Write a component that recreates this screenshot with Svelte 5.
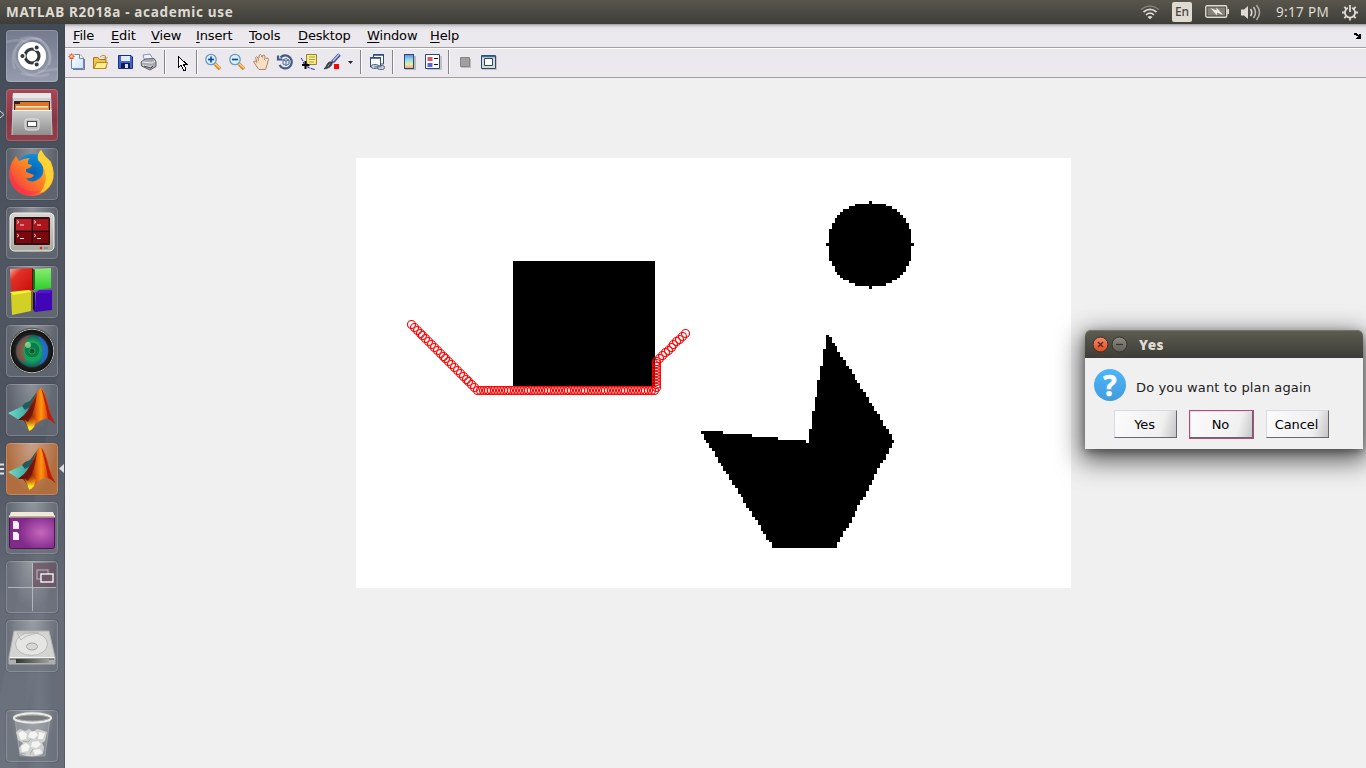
<script>
  const CELL_X = 715 / 251;
  const CELL_Y = 430 / 151;
  const px = (c) => Math.round(c * CELL_X);
  const py = (r) => Math.round(r * CELL_Y);
  const block = (c0, r0, c1, r1) =>
    `M${px(c0)} ${py(r0)}H${px(c1)}V${py(r1)}H${px(c0)}Z`;

  // Occupancy grid: square, disc and concave polygon
  let obstacles = block(55, 36, 105, 80);
  for (let dy = -15; dy <= 15; dy++) {
    const w = Math.floor(Math.sqrt(225 - dy * dy));
    obstacles += block(180 - w, 30 + dy, 181 + w, 31 + dy);
  }
  const spike = [95, 89, 84, 78, 73, 67];
  for (let c = 121; c <= 188; c++) {
    let top;
    if (c < 129) top = 96;
    else if (c < 139) top = 97;
    else if (c < 148) top = 98;
    else if (c < 158) top = 99;
    else if (c === 158) top = 100;
    else if (c < 165) top = spike[c - 159];
    else top = Math.floor(62 + ((c - 165) * 37) / 23);
    let bottom = 137;
    if (c < 146) bottom = Math.round(97 + (c - 121) * 1.6);
    else if (c > 168) bottom = Math.round(100 + (188 - c) * 1.85);
    obstacles += block(c, top, c + 1, bottom);
  }

  // Planned path, one marker per step
  const corners = [[55.5, 166.5], [121.5, 232.5], [298.5, 232.5], [300.5, 229.5], [300.5, 203], [329.5, 175.5]];
  const steps = [23, 62, 1, 9, 10];
  const trail = [];
  corners.slice(0, -1).forEach(([x, y], i) => {
    const [nx, ny] = corners[i + 1];
    for (let k = 0; k < steps[i]; k++) {
      const t = k / steps[i];
      trail.push([Math.floor(x + (nx - x) * t) + 0.5, Math.floor(y + (ny - y) * t) + 0.5]);
    }
  });
  trail.push([329.5, 175.5]);

  const menus = [
    ['File', 38], ['Edit', 40], ['View', 45], ['Insert', 53],
    ['Tools', 49], ['Desktop', 69], ['Window', 63], ['Help', 40]
  ];
  const tools = ['new', 'open', 'save', 'print', '|', 'gap', 'arrow', '|', 'zin', 'zout', 'hand', 'rot',
    'data', 'brush', 'caret', '|', 'link', '|', 'cbar', 'legend', '|', 'hide', 'dock'];
  const tiles = ['dash', 'files', 'firefox', 'terminator', 'blocks', 'camera', 'matlab', 'matlab2', 'window', 'workspace', 'disk', 'trash'];
</script>

<div class="screen">
  <header class="panel">
    <span class="title">MATLAB R2018a - academic use</span>
    <div class="tray">
      <svg class="wifi" width="20" height="16" viewBox="0 0 20 16" fill="none" stroke="#dfdbd2">
        <path d="M1 5.5Q10-1.5 19 5.5" stroke="#85827a" stroke-width="1.5" />
        <path d="M3.5 8Q10 2.8 16.500 8M6 10.800Q10 7.400 14 10.800" stroke-width="1.700" />
        <path d="M7.500 13Q10 11 12.500 13L10 15.200Z" fill="#dfdbd2" stroke="none" />
      </svg>
      <span class="lang">En</span>
      <svg class="battery" width="24" height="14" viewBox="0 0 24 14">
        <rect x=".75" y=".75" width="21" height="11.500" rx="1.500" fill="none" stroke="#dfdbd2" stroke-width="1.400" />
        <path d="M22.200 4H24V9H22.200z" fill="#dfdbd2" /><rect x="2.500" y="2.500" width="17.500" height="8" fill="#85827a" />
        <path d="M5.500 3L11.500 5.500V2.500L18 10L12 7.500V10.500Z" fill="#f0ede4" />
      </svg>
      <svg class="volume" width="20" height="17" viewBox="0 0 20 17" fill="none" stroke="#dfdbd2" stroke-width="1.600">
        <path d="M0 5.500H3L7 2V15L3 11.500H0Z" fill="#dfdbd2" stroke="none" />
        <path d="M9.500 5Q12 8.500 9.500 12" /><path d="M12.500 3Q16.500 8.500 12.500 14" stroke="#c3bfb7" />
        <path d="M15.500 1Q21.500 8.500 15.500 16" stroke="#aba79f" />
      </svg>
      <time>9:17 PM</time>
      <svg class="gear" width="16" height="17" viewBox="0 0 16 17" fill="none" stroke="#dfdbd2">
        <path d="M5.800 3.900A5.100 5.100 0 1 0 10.200 3.900" stroke-width="1.800" /><path d="M8 1V8" stroke-width="1.800" />
        <path d="M8 13.500V16.500M0 8.500H3M13 8.500H16M2.300 14.200L4.300 12.200M13.700 14.200L11.700 12.200M2.300 2.800L4.300 4.800M13.700 2.800L11.700 4.800" stroke-width="1.800" />
      </svg>
    </div>
  </header>

  <div class="body">
    <nav class="launcher">
      {#each tiles as t}
        <div class="tile {t}">
          <svg width="52" height="52" viewBox="0 0 52 52">
            {#if t === 'dash'}
              <g fill="none" stroke="#d9dbe5" stroke-opacity=".22" stroke-width="2.500">
                <path d="M9 39C1 18 18 5 31 9S46 28 43 35" /><path d="M14 9C35 2 47 19 43 32S22 47 15 43" /><path d="M43 44C22 52 5 34 9 22S26 7 36 10" />
                <path d="M1 12Q13 8 24 13M51 39Q43 40 32 42" />
              </g>
              <circle cx="26" cy="26" r="14" fill="#fff" />
              <circle cx="26" cy="26" r="7" fill="none" stroke="#33373d" stroke-width="3.200" />
              <g fill="#33373d" stroke="#fff" stroke-width="1.300"><circle cx="16.500" cy="26" r="2.700" /><circle cx="30.700" cy="17.500" r="2.700" /><circle cx="30.700" cy="34.500" r="2.700" /></g>
            {:else if t === 'files'}
              <path d="M7 4H45L46.500 46H5.500Z" fill="#cfcfcf" /><path d="M7 4H45V9H6.500Z" fill="#e8e8e8" />
              <path d="M8 12H44V22H8Z" fill="#33221d" /><path d="M9 15H14V13H43V22H9Z" fill="#dc7327" /><path d="M10 17H42V22H10Z" fill="#ffe6c4" /><path d="M9 18.500H43V22H9Z" fill="#ed9148" />
              <path d="M6.500 21H45.500V46H6.500Z" fill="url(#metal)" /><path d="M6.500 21.500H45.500" stroke="#f6f6f6" />
              <rect x="19" y="30" width="14" height="11" rx="2.500" fill="#bcbcbc" stroke="#e4e4e4" /><rect x="21.500" y="32.500" width="9" height="5" fill="#fff" stroke="#4c4c4c" />
            {:else if t === 'firefox'}
              <circle cx="26.500" cy="25" r="19" fill="url(#ffblue)" />
              <path d="M6 14L10 8L13 13Q18 10 24 10Q21 13 22 16L26 17Q25 20 20 21L20 24L28 27Q26 31 20 30Q24 36 31 32Q39 28 37 19Q36 15 32 12Q31 6 35 2Q38 9 43 12L45 14Q50 26 46 35Q40 47 27 48Q11 48 5 35Q1 24 6 14Z" fill="url(#fox)" />
              <path d="M35 2Q39 9 44 13Q50 27 45 36Q41 43 34 45Q42 34 39 24Q37 16 32 12Q31 6 35 2Z" fill="#ffd632" fill-opacity=".9" />
              <path d="M5 15Q4 30 13 38Q21 45 34 43Q22 51 11 42Q2 34 5 15Z" fill="#ff2854" fill-opacity=".5" />
            {:else if t === 'terminator'}
              <rect x="4" y="6" width="44" height="38" rx="4.500" fill="url(#monitor)" stroke="#f2f2ec" /><rect x="8" y="10" width="36" height="28" rx="1.500" fill="#301012" />
              <rect x="10" y="12" width="15.500" height="11.500" fill="#bd2028" /><rect x="27" y="12" width="15.500" height="11.500" fill="#a9151c" /><path d="M10 25H25.500V36H10ZM27 25H42.500V36H27Z" fill="#7b080d" />
              <g fill="none" stroke="#ffd5d5"><path d="M11 13.500L13 15L11 16.500M14 18H18M28 13.500L30 15L28 16.500M31 18H35M11 27L13 28.500L11 30M14 31.500H18M28 27L30 28.500L28 30M31 31.500H35" /></g>
              <circle cx="35" cy="41" r="1.300" fill="#f31818" /><path d="M38 40H42V42H38Z" fill="#91928a" />
            {:else if t === 'blocks'}
              <path d="M4 3L26 2V24L5 25Z" fill="url(#redb)" /><path d="M26 2L28 4V24H26Z" fill="#680b05" />
              <path d="M29 3L45 2V22L28 24Z" fill="url(#greenb)" /><path d="M27 5L29 4V23H27Z" fill="#087818" />
              <path d="M5 28L25 26V45L6 49Z" fill="#d2cf27" /><path d="M4 26L23 24L26 26L7 29Z" fill="#f5f12a" /><path d="M25 26L27 24V43L25 45Z" fill="#77770d" />
              <path d="M30 27L46 24V44L29 46Z" fill="#3f05b7" /><path d="M29 27L33 24L46 24L44 27Z" fill="#5314d6" /><path d="M29 27V46L27 43V26Z" fill="#21036b" />
            {:else if t === 'camera'}
              <circle cx="26" cy="26" r="23" fill="#101211" stroke="#686868" /><circle cx="26" cy="26" r="21.800" fill="none" stroke="#bfc0bd" stroke-width="1" />
              <circle cx="26" cy="26" r="20" fill="#1b1b1b" /><circle cx="26" cy="26" r="17" fill="#2c2c2b" /><circle cx="26" cy="26" r="16" fill="url(#lens)" />
              <path d="M11 31C8 20 16 11 25 10C17 17 17 29 20 38Q13 36 11 31Z" fill="#c63433" fill-opacity=".55" /><path d="M32 11C46 16 45 36 33 40C38 31 37 21 32 11Z" fill="#2869e2" fill-opacity=".75" />
              <circle cx="26" cy="25" r="8" fill="#087045" fill-opacity=".7" stroke="#36c776" stroke-opacity=".5" /><circle cx="26" cy="26" r="3" fill="#0e5932" stroke="#45d372" stroke-opacity=".5" />
              <circle cx="22" cy="20" r="3" fill="#d6ffb8" fill-opacity=".55" />
            {:else if t === 'matlab' || t === 'matlab2'}
              <path d="M2 29L15 23L19 20Q23 20 27 13Q32 5 35 4L30 16L22 31L13 36Z" fill="url(#teal)" />
              <path d="M16 22L19 19L24 17Q29 10 34 5L26 22L19 26Z" fill="#215b5d" />
              <path d="M12 36L18 31Q23 26 29 12Q32 5 35 4Q39 6 43 24Q45 33 49.500 40Q43 34 38 35Q32 37 28 43Q26 46 23 47Q21 40 17 36Z" fill="url(#mat)" />
              <path d="M18 35Q22 37 25 31L30 37L28 43Q26 46 23 47Q21 40 18 35Z" fill="url(#tip)" />
              <path d="M35 4Q39 9 42 23Q44 33 49.500 40Q45 36 42 35Q40 21 35 4Z" fill="#b91c0b" />
              <path d="M12 36L19 31Q26 22 31 9Q29 28 22 38Q18 34 12 36Z" fill="#68110e" fill-opacity=".8" />
            {:else if t === 'window'}
              <rect x="3.500" y="11" width="45" height="35.500" rx="2" fill="url(#purple)" stroke="#4d174e" /><path d="M5 10H47L49 14V15.500H3V14Z" fill="#f0ead9" />
              <path d="M4 15H48" stroke="#857a5d" /><path d="M7 19H11L13 21V27H7ZM7 30H11L13 32V38H7Z" fill="#f7eef7" />
            {:else if t === 'workspace'}
              <path d="M27 2H50V26H27Z" fill="#674a59" fill-opacity=".65" /><path d="M26.500 2V50M2 26.500H50" stroke="#c4c8d0" stroke-opacity=".75" />
              <rect x="31" y="9" width="11" height="9" fill="none" stroke="#b6a9b2" stroke-width="1.200" /><rect x="35" y="13" width="12" height="8" fill="#6c5764" stroke="#fff" stroke-width="1.300" />
            {:else if t === 'disk'}
              <path d="M8 11H43L49 37V44H3V37Z" fill="#d4d5d2" stroke="#aeb0ad" /><ellipse cx="25.500" cy="24" rx="16" ry="11.500" fill="#e5e6e4" stroke="#b7b9b7" />
              <path d="M11 13H33Q19 15 15 20Z" fill="none" stroke="#b7b9b7" /><ellipse cx="26" cy="26.500" rx="5.500" ry="3.500" fill="#d7d8d5" stroke="#a0a29f" />
              <path d="M3 37H49V44H3Z" fill="#aeb0ac" /><path d="M4 38.500H48V40H4Z" fill="#777b77" /><path d="M10 39H43V43H10Z" fill="url(#slot)" /><path d="M3.500 37.500H48.500" stroke="#f4f4f2" />
            {:else}
              <path d="M9 8L14 46H39L44 8Z" fill="#d8dbd8" fill-opacity=".22" stroke="#d8dad8" stroke-opacity=".35" />
              <path d="M10 22L14 19L19 21L23 19L27 22L31 19L35 20L41 22L39 31L36 33L38 37L37 44Q26 49 14 44L13 38L17 33L12 30Z" fill="#cfd1ce" />
              <path d="M12 23L17 21L21 24L20 29L15 30ZM24 22L29 21L32 25L28 29L22 27ZM33 22L39 23L37 29L32 29ZM15 36L20 33L24 36L22 41L16 42ZM26 32L32 31L35 34L31 38L25 37ZM27 40L34 39L36 43L29 45Z" fill="#f4f5f3" />
              <path d="M17 31L22 32L25 29M24 44L27 39M14 43L20 44" fill="none" stroke="#a9aca9" />
              <ellipse cx="26.500" cy="8" rx="18.500" ry="4.500" fill="#77797b" stroke="#e8ebe7" stroke-width="2.300" /><ellipse cx="26.500" cy="8" rx="16" ry="3" fill="none" stroke="#a9aca9" />
            {/if}
          </svg>
          {#if t === 'files'}<svg class="run" width="5" height="9" viewBox="0 0 5 9"><path d="M0 1L4 4.500L0 8" fill="none" stroke="#dcdcdc" /></svg>{/if}
          {#if t === 'matlab2'}
            <svg class="run" width="5" height="12" viewBox="0 0 5 12"><path d="M0 1.500H4M0 6H4M0 10.500H4" stroke="#e2e2e2" stroke-width="2" /></svg>
            <svg class="focus" width="5" height="9" viewBox="0 0 5 9"><path d="M5 0V9L0 4.500Z" fill="#dedede" /></svg>
          {/if}
        </div>
      {/each}
    </nav>

    <main>
      <div class="menubar">
        {#each menus as [name, w]}<span style="width:{w}px"><u>{name[0]}</u>{name.slice(1)}</span>{/each}
        <svg width="8" height="7" viewBox="0 0 8 7"><path d="M0 0H3V1H4V2H5V1H7V6H2V5H3V4H4V3H2V2H0Z" fill="#000" shape-rendering="crispEdges" /></svg>
      </div>
      <div class="toolbar">
        {#each tools as t}
          {#if t === '|'}<i class="sep"></i>
          {:else if t === 'gap'}<i class="gap"></i>
          {:else}
            <svg width={t === 'caret' ? 12 : t === 'arrow' ? 23 : 24} height="24" viewBox="0 0 {t === 'caret' ? 12 : t === 'arrow' ? 23 : 24} 24">
              {#if t === 'new'}
                <path d="M6.500 4.500H15L18.500 8V18.500H6.500Z" fill="url(#page)" stroke="#6b89ae" /><path d="M14.500 4.500V8.500H18.500" fill="#fff" stroke="#6b89ae" /><path d="M8 19.500H19.500V9" fill="none" stroke="#35527b" stroke-opacity=".7" />
                <circle cx="6.500" cy="6.500" r="3.500" fill="#ebe9ee" /><path d="M6.500 3.500V9.500M3.500 6.500H9.500M4.500 4.500L8.500 8.500M8.500 4.500L4.500 8.500" stroke="#e5552f" stroke-width="1.200" /><circle cx="6.500" cy="6.500" r="1.300" fill="#ffe28c" />
              {:else if t === 'open'}
                <path d="M4.500 18.500V7.500H9L10.500 9.500H17V18.500Z" fill="#f0c34c" stroke="#a87817" /><path d="M5 18.500L7.500 12.500H18.500L16.500 18.500Z" fill="#ffef91" stroke="#b88622" /><path d="M11 7Q14 4 16.500 6V8M14.500 7L16.500 9L18.500 7" fill="none" stroke="#b98c31" />
              {:else if t === 'save'}
                <path d="M5.500 5.500H18L19.500 7V18.500H5.500Z" fill="#4265c7" stroke="#182f85" /><path d="M8 6H17V11H8Z" fill="#dfebff" /><path d="M8 13H17V18H8Z" fill="#111b4d" /><path d="M12 14H15V18H12Z" fill="#d9dfef" />
              {:else if t === 'print'}
                <path d="M6 5L13 4L16 9L8 12Z" fill="#eef3ff" stroke="#8b97ab" /><path d="M4 12L8 9L17 8.500L19 11.500V16.500L13 20L4.500 16Z" fill="#a8aaae" stroke="#606268" /><path d="M5 12L15 13L18 11M6 15L14 17" fill="none" stroke="#eef1f2" /><path d="M7 16L14 18L16 16" fill="none" stroke="#44484e" />
              {:else if t === 'arrow'}
                <path d="M8.500 6.500V17.500L11 15L13.500 20H15.500V18L13.500 14.500H17Z" fill="#fff" stroke="#000" shape-rendering="crispEdges" />
              {:else if t === 'zin' || t === 'zout'}
                <path d="M14 14L19 19" stroke="#d88723" stroke-width="3.500" /><path d="M14 13.500L19 18" stroke="#ffd18a" stroke-width="1.200" />
                <circle cx="10" cy="9.500" r="5.200" fill="#d6f2f5" stroke="#6c98bd" stroke-width="1.300" /><path d="M7 9.500H13" stroke="#1746a5" stroke-width="1.700" />{#if t === 'zin'}<path d="M10 6.500V12.500" stroke="#1746a5" stroke-width="1.700" />{/if}
              {:else if t === 'hand'}
                <path d="M9.500 19L6 14L4.500 11.500Q6 10 8 12.500L6.500 7.500Q7.500 5.500 9 8L10 11V5.500Q11.500 3.500 12.500 5.500V10L13.500 5.500Q15.500 4 16 6.500L15.500 11L17.500 8Q19.500 7.500 19.500 9.500L18 15L16.500 19.500H10Z" fill="#f9dec4" stroke="#b18463" /><path d="M9 14L11 16M10.500 11V8M12.500 10V7M15 11L17 9" stroke="#fff6e7" />
              {:else if t === 'rot'}
                <path d="M7.500 7.500A6.500 6.500 0 1 1 6.500 15M5 5.500V9.500H9.500" fill="none" stroke="#425b85" stroke-width="2.200" /><path d="M10 10L13 8.500L16 10V14L13 15.500L10 14ZM10 10L13 11L16 10M13 11V15" fill="#e2e8f3" stroke="#536b93" />
              {:else if t === 'data'}
                <path d="M4 8Q6 10 7 14Q10 18 18 19.500" fill="none" stroke="#1713ed" stroke-dasharray="4 1" /><path d="M9.500 4.500H19.500V14.500H13L10.500 17V13.500H9.500Z" fill="#f6ec83" stroke="#91862b" /><path d="M12 7H18M12 9.500H18M12 12H17" stroke="#aaa256" /><path d="M8.500 11V19M5 15H12.500" stroke="#000" stroke-width="2" />
              {:else if t === 'brush'}
                <path d="M18.500 4.500L11.500 12" stroke="#444c9e" stroke-width="3.600" /><path d="M18 4.500L12 11" stroke="#b9c4ef" stroke-width="1.500" /><path d="M11.500 12Q11 18 3 19Q5 17 6 14.500Q7.500 11 11.500 12Z" fill="#363d49" stroke="#363d49" stroke-width=".8" /><path d="M6.500 17L9 13.500" stroke="#919ba8" /><path d="M13 14H18V19H13Z" fill="#f00" />
              {:else if t === 'caret'}
                <path d="M3 11H8L5.500 14Z" fill="#222" />
              {:else if t === 'link'}
                <path d="M8.500 4.500H18.500V14H8.500Z" fill="#fff" stroke="#2c4d80" /><path d="M5.500 7.500H15.500V17H5.500Z" fill="#f8fbff" stroke="#2c4d80" /><path d="M8 5H19M5 8H16" stroke="#2c4d80" stroke-width="1.500" /><rect x="6.500" y="14.500" width="7" height="4" rx="2" fill="#c9d2dc" stroke="#56697e" /><rect x="12.500" y="15.500" width="7" height="4" rx="2" fill="#c9d2dc" stroke="#56697e" /><path d="M9.500 16.800H16.500" stroke="#667685" stroke-width="1.200" />
              {:else if t === 'cbar'}
                <path d="M8 6H19V20H8Z" fill="#bbbabc" /><rect x="7.500" y="4.500" width="9" height="14" fill="url(#colorscale)" stroke="#284876" />
              {:else if t === 'legend'}
                <path d="M6 6H21V20H6Z" fill="#c2c1c4" /><path d="M4.500 4.500H18.500V18.500H4.500Z" fill="#fff" stroke="#284876" /><path d="M6.500 7H11.500V11H6.500Z" fill="#e4525c" /><path d="M6.500 13H11.500V17H6.500Z" fill="#5665e8" /><path d="M13 8.500H17M13 14.500H17" stroke="#111" />
              {:else if t === 'hide'}
                <path d="M8 9H18V18H8Z" fill="#bdbcc0" /><path d="M7.500 7.500H16.500V16.500H7.500Z" fill="#a0a0a0" stroke="#858585" />
              {:else}
                <path d="M5 6H20V20H5Z" fill="#c6c5c8" /><path d="M4.500 5.500H18.500V18.500H4.500Z" fill="#d8dbd0" stroke="#284876" /><path d="M5 6.500H18" stroke="#426a9d" stroke-width="1.500" /><path d="M7.500 8.500H15.500V15.500H7.500Z" fill="#fff" stroke="#284876" />
              {/if}
            </svg>
          {/if}
        {/each}
      </div>
      <section class="figure">
        <svg class="plot" width="715" height="430" viewBox="0 0 715 430">
          <path d={obstacles} fill="#000" shape-rendering="crispEdges" />
          <g fill="none" stroke="#f00" stroke-width="1.150">{#each trail as [x, y]}<circle cx={x} cy={y} r="4" />{/each}</g>
        </svg>
      </section>
    </main>
  </div>

  <div class="dialog">
    <div class="caption">
      <svg width="36" height="17" viewBox="0 0 36 17"><circle cx="8.500" cy="8.500" r="7.500" fill="url(#close)" stroke="#35332d" /><path d="M6 6L11 11M11 6L6 11" stroke="#57261a" stroke-width="1.300" /><circle cx="27.500" cy="8.500" r="7.500" fill="url(#mini)" stroke="#35332d" /><path d="M24 8.500H31" stroke="#35342f" stroke-width="1.300" /></svg>
      <b>Yes</b>
    </div>
    <div class="message"><span class="question">?</span><p>Do you want to plan again</p></div>
    <div class="buttons"><button>Yes</button><button class="default">No</button><button>Cancel</button></div>
  </div>

  <svg width="0" height="0" class="defs">
    <defs>
      <linearGradient id="metal" x2="0" y2="1"><stop stop-color="#d0d0d0" /><stop offset="1" stop-color="#8e8e8e" /></linearGradient>
      <linearGradient id="monitor" x2="0" y2="1"><stop stop-color="#d7d7d1" /><stop offset="1" stop-color="#aaa9a0" /></linearGradient>
      <radialGradient id="ffblue"><stop stop-color="#0a5fae" /><stop offset="1" stop-color="#0b8fe0" /></radialGradient>
      <linearGradient id="fox" x1="1" x2="0" y2="1"><stop stop-color="#ffe943" /><stop offset=".45" stop-color="#ff8a21" /><stop offset="1" stop-color="#f1204c" /></linearGradient>
      <linearGradient id="redb" x2="1" y2="1"><stop stop-color="#ffb5a6" /><stop offset=".3" stop-color="#e33127" /><stop offset="1" stop-color="#c70e0a" /></linearGradient>
      <linearGradient id="greenb" x2="0" y2="1"><stop stop-color="#8cec72" /><stop offset="1" stop-color="#2dce2d" /></linearGradient>
      <radialGradient id="lens"><stop stop-color="#0a8050" /><stop offset=".6" stop-color="#13a45a" /><stop offset="1" stop-color="#155d62" /></radialGradient>
      <linearGradient id="teal" x2="1"><stop stop-color="#70ddca" /><stop offset="1" stop-color="#237d80" /></linearGradient>
      <linearGradient id="mat" x2="1"><stop stop-color="#5d100b" /><stop offset=".35" stop-color="#8e2008" /><stop offset=".5" stop-color="#e8600c" /><stop offset=".62" stop-color="#ff970f" /><stop offset=".8" stop-color="#d64009" /><stop offset="1" stop-color="#9d160b" /></linearGradient>
      <linearGradient id="tip" x2="0" y2="1"><stop stop-color="#e05a08" stop-opacity="0" /><stop offset=".75" stop-color="#ffe421" /></linearGradient>
      <radialGradient id="purple" cx=".7" cy=".55"><stop stop-color="#c667bd" /><stop offset="1" stop-color="#812a8c" /></radialGradient>
      <linearGradient id="slot"><stop stop-color="#303630" /><stop offset="1" stop-color="#9d9f9b" /></linearGradient>
      <linearGradient id="page" x2="1" y2="1"><stop stop-color="#fff" /><stop offset="1" stop-color="#c9e2fa" /></linearGradient>
      <linearGradient id="colorscale" x2="0" y2="1"><stop stop-color="#7180df" /><stop offset=".35" stop-color="#8cdde9" /><stop offset=".7" stop-color="#eeea9a" /><stop offset="1" stop-color="#efa18a" /></linearGradient>
      <linearGradient id="close" x2="0" y2="1"><stop stop-color="#f28b6c" /><stop offset="1" stop-color="#e14a1b" /></linearGradient>
      <linearGradient id="mini" x2="0" y2="1"><stop stop-color="#8c8a82" /><stop offset="1" stop-color="#625f57" /></linearGradient>
    </defs>
  </svg>
</div>

<style>
  :global(body) { margin: 0; overflow: hidden; }
  .screen { position: relative; width: 1366px; height: 768px; display: flex; flex-direction: column; overflow: hidden; font-family: "DejaVu Sans", sans-serif; background: #f0f0f0; }
  .defs { position: absolute; }
  svg { display: block; flex: none; }
  .panel { height: 24px; flex: none; box-sizing: border-box; display: flex; justify-content: space-between; align-items: center; padding: 0 8px 0 6px; background: linear-gradient(#58564c, #3e3d38); color: #dfdbd2; position: relative; z-index: 2; font-family: "Noto Sans", sans-serif; }
  .title { font-size: 13.500px; font-weight: 700; line-height: 24px; letter-spacing: .68px; }
  .tray { display: flex; align-items: center; height: 24px; }
  .lang { margin-left: 12px; width: 20px; height: 20px; line-height: 20px; border-radius: 2px; text-align: center; background: #dfdbd2; color: #484740; font-size: 12px; font-weight: 500; }
  .battery { margin-left: 13px; }
  .volume { margin-left: 12px; }
  time { margin-left: 15px; width: 54px; white-space: nowrap; font-size: 13.500px; letter-spacing: .35px; line-height: 24px; }
  .gear { margin-left: 12px; }
  .body { display: flex; flex: 1; min-height: 0; }
  .launcher { width: 65px; flex: none; box-sizing: border-box; padding: 6px 0 0 6px; display: flex; flex-direction: column; gap: 7px; background: radial-gradient(ellipse at 60% 92%, #7a7f8a99, transparent 25%), linear-gradient(100deg, transparent 60%, #ffffff08 61% 75%, transparent 76%), linear-gradient(#434b56, #505762 35%, #4c535f 55%, #656b77 78%, #676e7a); box-shadow: inset -1px 0 #3d424b66; }
  .tile { position: relative; width: 52px; height: 52px; box-sizing: border-box; flex: none; border-radius: 4px; background: radial-gradient(ellipse at 50% 0, #ffffff4a, transparent 65%), #777c8570; box-shadow: inset 0 0 0 1px #ffffff30, 0 0 1px #20242b; }
  .dash { background: linear-gradient(#747b8e, #858b9e 50%, #969cac); }
  .files { background: linear-gradient(#a84755, #873643 60%, #94404b); }
  .matlab2 { background: radial-gradient(ellipse at 50% 0, #c9a18b, transparent 70%), #b06d3d; }
  .trash { margin-top: 31px; }
  .run { position: absolute; left: -6px; top: 21px; }
  .matlab2 .run { top: 20px; }
  .focus { position: absolute; left: 53px; top: 21px; }
  main { flex: 1; display: flex; flex-direction: column; min-width: 0; }
  .menubar { height: 24px; flex: none; box-sizing: border-box; border-bottom: 1px solid #a1a0a4; display: flex; align-items: flex-start; padding: 3px 4px 0 8px; background: linear-gradient(#98979a, #d2d0d5 2px, #e5e3e8 4px, #ebe9ee 7px); font-size: 13px; line-height: 17px; color: #000; letter-spacing: -.15px; }
  .menubar u { text-underline-offset: 2px; text-decoration-thickness: 1px; }
  .menubar svg { margin: 6px 0 0 auto; }
  .toolbar { height: 30px; flex: none; box-sizing: border-box; display: flex; align-items: flex-start; padding-top: 1px; border-top: 1px solid #fff; border-bottom: 1px solid #a1a0a4; background: #ebe9ee; }
  .sep { width: 8px; height: 24px; flex: none; background: linear-gradient(90deg, transparent 3px, #858489 3px 4px, #fff 4px 5px, transparent 5px); }
  .gap { width: 1px; }
  .figure { flex: 1; padding: 80px 0 0 291px; background: #f0f0f0; }
  .plot { background: #fff; }
  .dialog { position: absolute; left: 1085px; top: 330px; width: 278px; height: 119px; border-radius: 6px 6px 0 0; background: #f0f0f0; box-shadow: 0 8px 26px 4px #0000009c, 0 3px 8px #00000059; }
  .caption { height: 28px; box-sizing: border-box; display: flex; align-items: center; gap: 11px; padding-left: 7px; border-radius: 6px 6px 0 0; background: linear-gradient(#5e5d50, #3d3c37); box-shadow: inset 0 1px #77756b; color: #dfdbd2; font: 700 13.500px "Noto Sans", sans-serif; letter-spacing: .4px; }
  .caption b { padding-top: 2px; }
  .message { display: flex; padding: 11px 0 0 9px; gap: 10px; }
  .question { width: 32px; height: 32px; border-radius: 50%; background: linear-gradient(#4cb5fa, #419cdd); color: #fff; text-align: center; font: 700 28px/32px "Open Sans", sans-serif; -webkit-text-stroke: .6px #fff; }
  p { margin: 10px 0 0; font-size: 13px; line-height: 17px; letter-spacing: .14px; color: #202020; white-space: nowrap; }
  .buttons { display: flex; gap: 12px; padding: 9px 0 0 29px; }
  button { width: 63px; height: 28px; padding: 0 2px 0 0; border: 1px solid #d7d9e5; border-right-color: #666675; border-bottom-color: #666675; background: linear-gradient(105deg, #fbfbfb, #f0f0f0 75%, #c4c4c4); font: 13px "DejaVu Sans", sans-serif; letter-spacing: -.1px; color: #000; }
  button.default { width: 65px; height: 29px; border: 1px solid #b04c74; box-shadow: inset -1px -1px #666675, inset 1px 1px #dfe0e9; }
</style>
